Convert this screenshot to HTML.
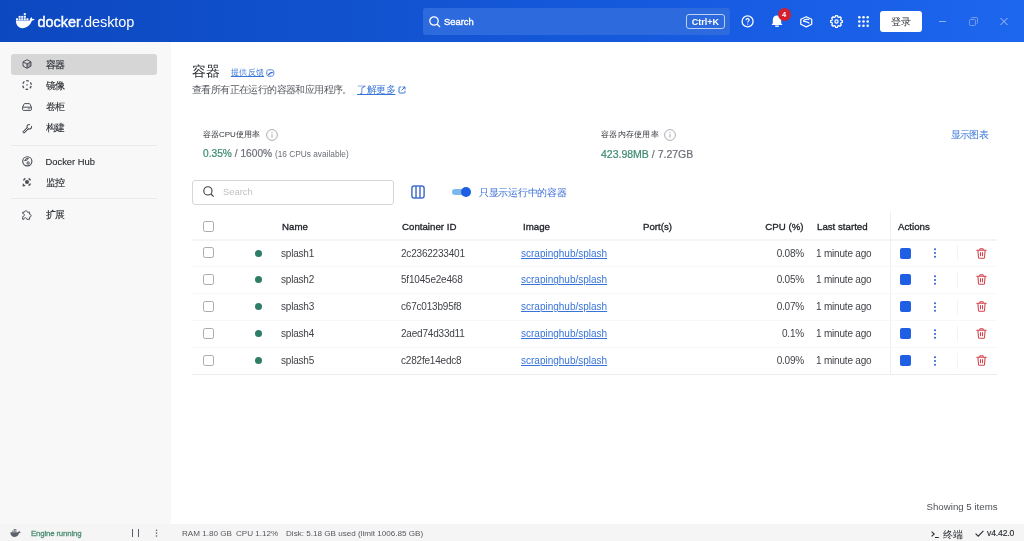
<!DOCTYPE html>
<html><head><meta charset="utf-8">
<style>
*{box-sizing:border-box;margin:0;padding:0}
html,body{width:1024px;height:541px;overflow:hidden;font-family:"Liberation Sans",sans-serif;background:#fff;color:#1f2328}
.a{position:absolute;white-space:nowrap}
svg{position:absolute;overflow:visible}
#hdr{position:absolute;left:0;top:0;width:1024px;height:42px;background:linear-gradient(90deg,#0c48c0 0%,#1253d0 38%,#175ce3 72%,#1d66ee 100%)}
#side{position:absolute;left:0;top:42px;width:171px;height:482px;background:#f8f8f8}
#foot{position:absolute;left:0;top:524px;width:1024px;height:17px;background:#f5f5f5}
.nav{position:absolute;left:11px;width:146px;height:21px;border-radius:3px;font-size:10.2px;letter-spacing:-0.6px;color:#26292e;-webkit-text-stroke:0.1px #26292e}
.nav.sel{background:#d6d6d7}
.nav .t{position:absolute;left:34.5px;top:5px}
.hsep{position:absolute;left:11px;width:146px;height:1px;background:#e6e7e9}
.th{font-size:9.7px;color:#1f2228;-webkit-text-stroke:0.32px #1f2228}
.td{font-size:10px;letter-spacing:-0.2px;color:#404348}
.rowline{position:absolute;left:192px;width:805px;height:1px;background:#f8f8f9}
.cb{position:absolute;left:203.2px;width:11.3px;height:11.3px;border:1.4px solid #a9acb1;border-radius:2.2px;background:#fff}
.dot{position:absolute;left:255px;width:7px;height:7px;border-radius:50%;background:#2f7d66}
.stop{position:absolute;left:900px;width:11px;height:11px;border-radius:2px;background:#1f5fe3}
.lnk{color:#3874d8;text-decoration:underline}
</style></head>
<body><div id="wrap" style="position:absolute;left:0;top:0;width:1024px;height:541px;will-change:transform">
<div id="hdr">
  <!-- whale logo -->
  <svg style="left:15px;top:12px" width="20" height="17" viewBox="0 0 20 17">
    <g fill="#fff">
      <rect x="1" y="6.3" width="2" height="1.9"/><rect x="3.6" y="6.3" width="2" height="1.9"/><rect x="6.2" y="6.3" width="2" height="1.9"/><rect x="8.8" y="6.3" width="2" height="1.9"/><rect x="11.4" y="6.3" width="2" height="1.9"/>
      <rect x="3.6" y="3.9" width="2" height="1.9"/><rect x="6.2" y="3.9" width="2" height="1.9"/><rect x="8.8" y="3.9" width="2" height="1.9"/>
      <rect x="8.8" y="1.1" width="2" height="2.1"/>
      <path d="M0.9 8.6 H14.6 C15 7.3 15.6 5.8 16.2 5.1 C16.7 5.8 17.1 6.5 17.5 7.1 C18.2 6.9 19 6.9 19.7 7.2 C19.1 8.1 18.1 8.6 17 8.6 C15.6 13 12 16.2 7.4 16.2 C3.4 16.2 0.9 13 0.9 8.6 Z"/>
    </g>
  </svg>
  <div class="a" style="left:37.5px;top:13.5px;font-size:14.5px;color:#fff;letter-spacing:-0.05px"><span style="-webkit-text-stroke:0.4px #fff">docker</span>.desktop</div>
  <!-- search -->
  <div class="a" style="left:423px;top:8px;width:307px;height:27px;background:#2c6ade;border-radius:3px"></div>
  <svg style="left:429px;top:16px" width="12" height="12" viewBox="0 0 12 12"><circle cx="5" cy="5" r="4.2" fill="none" stroke="#fff" stroke-width="1.3"/><path d="M8 8 L11 11" stroke="#fff" stroke-width="1.3"/></svg>
  <div class="a" style="left:444px;top:16px;font-size:9.4px;color:#fff;-webkit-text-stroke:0.35px #fff">Search</div>
  <div class="a" style="left:686px;top:14px;width:39px;height:15px;border:1px solid #bcd0f6;border-radius:3px;font-size:9px;font-weight:bold;color:#fff;text-align:center;line-height:14.5px">Ctrl+K</div>
  <!-- help -->
  <svg style="left:741px;top:15px" width="13" height="13" viewBox="0 0 13 13"><circle cx="6.6" cy="6.4" r="5.5" fill="none" stroke="#fff" stroke-width="1.25"/><path d="M5 5.2 C5 4.2 5.7 3.6 6.6 3.6 C7.5 3.6 8.2 4.2 8.2 5 C8.2 6.1 6.7 6.2 6.7 7.5" fill="none" stroke="#fff" stroke-width="1.15"/><circle cx="6.7" cy="9.1" r="0.65" fill="#fff"/></svg>
  <!-- bell -->
  <svg style="left:771px;top:15px" width="12" height="13" viewBox="0 0 12 13"><path d="M6 0.5 C3.2 0.5 1.8 2.6 1.8 5.2 V8.2 L0.5 10 H11.5 L10.2 8.2 V5.2 C10.2 2.6 8.8 0.5 6 0.5 Z" fill="#fff"/><path d="M4.2 11.2 H7.8" stroke="#fff" stroke-width="1.4"/></svg>
  <div class="a" style="left:777.5px;top:8.3px;width:13px;height:13px;border-radius:50%;background:#d3202e;color:#fff;font-size:7.5px;font-weight:bold;text-align:center;line-height:13px">4</div>
  <!-- learning cap -->
  <svg style="left:800px;top:16px" width="13" height="12" viewBox="0 0 13 12"><path d="M6.25 0.7 L11.7 3.2 V8.3 L6.25 10.9 L0.8 8.3 V3.2 Z" fill="none" stroke="#fff" stroke-width="1.25" stroke-linejoin="round"/><path d="M3.2 5.2 C4.5 3.4 7.5 2.8 9.3 3.6 M3.2 5.2 C5 6 7.8 5.4 9.3 7.4" fill="none" stroke="#fff" stroke-width="1.2"/></svg>
  <!-- gear -->
  <svg style="left:829.5px;top:15px" width="13" height="13" viewBox="0 0 13 13"><path d="M5.58 0.67 L7.42 0.67 L7.67 1.95 L8.89 2.45 L9.97 1.73 L11.27 3.03 L10.55 4.11 L11.05 5.33 L12.33 5.58 L12.33 7.42 L11.05 7.67 L10.55 8.89 L11.27 9.97 L9.97 11.27 L8.89 10.55 L7.67 11.05 L7.42 12.33 L5.58 12.33 L5.33 11.05 L4.11 10.55 L3.03 11.27 L1.73 9.97 L2.45 8.89 L1.95 7.67 L0.67 7.42 L0.67 5.58 L1.95 5.33 L2.45 4.11 L1.73 3.03 L3.03 1.73 L4.11 2.45 L5.33 1.95 Z" fill="none" stroke="#fff" stroke-width="1.25" stroke-linejoin="round"/><circle cx="6.5" cy="6.5" r="1.6" fill="none" stroke="#fff" stroke-width="1.2"/></svg>
  <!-- grid -->
  <svg style="left:858px;top:16.3px" width="11" height="11" viewBox="0 0 11 11"><g fill="#fff"><circle cx="1.3" cy="1.3" r="1.25"/><circle cx="5.5" cy="1.3" r="1.25"/><circle cx="9.7" cy="1.3" r="1.25"/><circle cx="1.3" cy="5.5" r="1.25"/><circle cx="5.5" cy="5.5" r="1.25"/><circle cx="9.7" cy="5.5" r="1.25"/><circle cx="1.3" cy="9.7" r="1.25"/><circle cx="5.5" cy="9.7" r="1.25"/><circle cx="9.7" cy="9.7" r="1.25"/></g></svg>
  <!-- login -->
  <div class="a" style="left:880px;top:11px;width:42px;height:21px;background:#fff;border-radius:3px;font-size:10px;color:#2a2d33;text-align:center;line-height:22px">登录</div>
  <!-- window controls -->
  <div class="a" style="left:939px;top:21px;width:7px;height:1px;background:#8fb0ee"></div>
  <svg style="left:969px;top:17px" width="9" height="9" viewBox="0 0 9 9"><rect x="0.5" y="2.5" width="6" height="6" rx="1" fill="none" stroke="#7fa3ea" stroke-width="0.9"/><path d="M2.5 1.5 V1.2 C2.5 0.8 2.8 0.5 3.2 0.5 H7.8 C8.2 0.5 8.5 0.8 8.5 1.2 V5.8 C8.5 6.2 8.2 6.5 7.8 6.5 H7.5" fill="none" stroke="#7fa3ea" stroke-width="0.9"/></svg>
  <svg style="left:1000px;top:18px" width="8" height="7" viewBox="0 0 8 7"><path d="M0.5 0 L7.5 7 M7.5 0 L0.5 7" stroke="#a9c2f2" stroke-width="1"/></svg>
</div>

<div id="side">
  <div class="nav sel" style="top:11.5px;height:21px"><span class="t" style="top:4.8px">容器</span></div>
  <div class="nav" style="top:32px"><span class="t">镜像</span></div>
  <div class="nav" style="top:53px"><span class="t">卷柜</span></div>
  <div class="nav" style="top:74px"><span class="t">构建</span></div>
  <div class="hsep" style="top:102.5px;background:#e9eaec"></div>
  <div class="nav" style="top:108px"><span class="t" style="font-size:9.4px;letter-spacing:0;top:5.5px">Docker Hub</span></div>
  <div class="nav" style="top:128.5px"><span class="t">监控</span></div>
  <div class="hsep" style="top:156px;background:#e9eaec"></div>
  <div class="nav" style="top:161px"><span class="t">扩展</span></div>
  <!-- icons -->
  <svg style="left:21.8px;top:17px" width="10" height="10" viewBox="0 0 10 10"><path d="M5 5 L9 2.9 V7.1 L5 9.3 Z" fill="#9a9da2"/><path d="M5 0.7 L9 2.9 V7.1 L5 9.3 L1 7.1 V2.9 Z M1 2.9 L5 5 L9 2.9 M5 5 V9.3" fill="none" stroke="#4a4e55" stroke-width="1" stroke-linejoin="round"/></svg>
  <svg style="left:21.5px;top:38px" width="10" height="10" viewBox="0 0 10 10"><circle cx="5" cy="5" r="4.3" fill="none" stroke="#4a4e55" stroke-width="1.3" stroke-dasharray="2.6 1.9" stroke-dashoffset="3.55"/><path d="M3.9 4.5 H6.1 L5 6.1 Z" fill="#4a4e55"/></svg>
  <svg style="left:21.5px;top:60.5px" width="10" height="8" viewBox="0 0 10 8"><path d="M0.6 4.2 L1.9 1.3 C2.1 0.8 2.4 0.6 2.9 0.6 H7.1 C7.6 0.6 7.9 0.8 8.1 1.3 L9.4 4.2 V6.6 C9.4 7.1 9.1 7.4 8.6 7.4 H1.4 C0.9 7.4 0.6 7.1 0.6 6.6 Z M0.6 4.2 H9.4" fill="none" stroke="#4a4e55" stroke-width="1" stroke-linejoin="round"/><circle cx="6.3" cy="5.8" r="0.55" fill="#4a4e55"/><circle cx="7.7" cy="5.8" r="0.55" fill="#4a4e55"/></svg>
  <svg style="left:21.5px;top:80.5px" width="11" height="11" viewBox="0 0 11 11"><g stroke-linecap="round"><path d="M1.9 9.1 L5.6 5.4" stroke="#4a4e55" stroke-width="2.6"/><circle cx="7.3" cy="3.7" r="2.8" fill="#4a4e55"/><path d="M1.9 9.1 L5.6 5.4" stroke="#f8f8f8" stroke-width="0.9"/><circle cx="7.3" cy="3.7" r="1.8" fill="#f8f8f8"/><path d="M7.3 3.7 L10.5 0.5" stroke="#f8f8f8" stroke-width="2.1" stroke-linecap="butt"/></g></svg>
  <svg style="left:21.5px;top:113.5px" width="11" height="11" viewBox="0 0 11 11"><circle cx="5.3" cy="5.3" r="4.6" fill="none" stroke="#4a4e55" stroke-width="1.15"/><path d="M2.6 4.6 C3 3.4 4.6 2.3 6.3 2.2 C6.6 3.3 4.6 4.5 2.6 4.6 Z" fill="none" stroke="#4a4e55" stroke-width="1"/><circle cx="6.1" cy="7" r="1.2" fill="none" stroke="#4a4e55" stroke-width="1"/></svg>
  <svg style="left:21.5px;top:134.5px" width="10" height="10" viewBox="0 0 10 10"><g fill="#4a4e55"><circle cx="5" cy="5" r="2"/><path d="M0.8 2.9 L2.9 0.8 L3.8 1.9 L1.9 3.8 Z"/><path d="M9.2 2.9 L7.1 0.8 L6.2 1.9 L8.1 3.8 Z"/><path d="M0.5 9.5 L0.9 6.3 L3.7 9.1 Z"/><path d="M9.2 7.1 L7.1 9.2 L6.2 8.1 L8.1 6.2 Z"/></g></svg>
  <svg style="left:21.5px;top:167.5px" width="10" height="10" viewBox="0 0 10 10"><path d="M3.5 0.8 C4.5 0.5 5.4 1.2 5.4 2.2 H7.6 V4.2 C8.6 4.2 9.3 5 9.1 6 C8.9 6.8 8.2 7.2 7.6 7.2 V9.3 H4.8 C4.8 8.4 4.2 7.8 3.3 7.8 C2.4 7.8 1.8 8.4 1.8 9.3 H0.7 V6.6 C1.6 6.6 2.3 5.9 2.3 5 C2.3 4.1 1.6 3.4 0.7 3.4 V2.2 H2.3 C2.3 1.6 2.8 1 3.5 0.8 Z" fill="none" stroke="#4a4e55" stroke-width="1" stroke-linejoin="round"/></svg>
</div>

<div id="main">
</div>

<!-- page header -->
<div class="a" style="left:192px;top:63px;font-size:14px;letter-spacing:0.3px;color:#1f2328">容器</div>
<div class="a lnk" style="left:231px;top:67px;font-size:8px;letter-spacing:0.25px">提供反馈</div>
<svg style="left:266px;top:69px" width="9" height="8" viewBox="0 0 9 8"><path d="M0.8 2.6 C0.8 1.5 1.5 0.8 2.6 0.8 H5.8 C7 0.8 7.8 1.6 7.8 2.8 V5 C7.8 6.2 7 7.2 5.8 7.2 H2.8 C1.6 7.2 0.8 6.2 0.8 5 Z" fill="none" stroke="#4a78d0" stroke-width="0.9"/><path d="M2.3 6.3 C3 4.5 4.5 3.6 6.8 3.4" fill="none" stroke="#3a6cd0" stroke-width="1.1"/></svg>
<div class="a" style="left:192px;top:82.9px;font-size:10.4px;letter-spacing:-0.6px;color:#54585e">查看所有正在运行的容器和应用程序。</div>
<div class="a lnk" style="left:357px;top:82.9px;font-size:10.4px;letter-spacing:-0.4px">了解更多</div>
<svg style="left:398px;top:85.5px" width="8" height="8" viewBox="0 0 8 8"><path d="M3.2 1 H1.6 C1.2 1 1 1.2 1 1.6 V6.4 C1 6.8 1.2 7 1.6 7 H6.4 C6.8 7 7 6.8 7 6.4 V4.8 M4.5 1 H7 V3.5 M7 1 L3.5 4.5" fill="none" stroke="#3874d8" stroke-width="1"/></svg>

<!-- stats -->
<div class="a" style="left:203px;top:129px;font-size:8px;color:#2f3237">容器CPU使用率</div>
<svg style="left:266px;top:128.5px" width="12" height="12" viewBox="0 0 12 12"><circle cx="6" cy="6" r="5.4" fill="none" stroke="#a0a4aa" stroke-width="0.9"/><path d="M6 5.3 V8.5" stroke="#a0a4aa" stroke-width="1"/><circle cx="6" cy="3.7" r="0.6" fill="#a0a4aa"/></svg>
<div class="a" style="left:203px;top:148.3px;font-size:10.2px;color:#6b6f76;-webkit-text-stroke:0.2px #6b6f76"><span style="color:#3b8a6e;-webkit-text-stroke:0.2px #3b8a6e">0.35%</span> / 1600% <span style="font-size:8.3px;-webkit-text-stroke:0">(16 CPUs available)</span></div>
<div class="a" style="left:601px;top:129px;font-size:8px;letter-spacing:0.27px;color:#2f3237">容器内存使用率</div>
<svg style="left:664px;top:128.5px" width="12" height="12" viewBox="0 0 12 12"><circle cx="6" cy="6" r="5.4" fill="none" stroke="#a0a4aa" stroke-width="0.9"/><path d="M6 5.3 V8.5" stroke="#a0a4aa" stroke-width="1"/><circle cx="6" cy="3.7" r="0.6" fill="#a0a4aa"/></svg>
<div class="a" style="left:601px;top:148.2px;font-size:10.5px;color:#6b6f76;-webkit-text-stroke:0.2px #6b6f76"><span style="color:#3b8a6e;-webkit-text-stroke:0.2px #3b8a6e">423.98MB</span> / 7.27GB</div>
<div class="a" style="left:950.5px;top:127.9px;font-size:10px;letter-spacing:-0.65px;color:#3874d8">显示图表</div>

<!-- toolbar -->
<div class="a" style="left:192px;top:180px;width:202px;height:25px;border:1px solid #d4d6da;border-radius:3px"></div>
<svg style="left:203px;top:186.2px" width="11" height="11" viewBox="0 0 11 11"><circle cx="4.9" cy="4.9" r="4.1" fill="none" stroke="#3a3d42" stroke-width="1.1"/><path d="M7.9 7.9 L10.6 10.6" stroke="#3a3d42" stroke-width="1.2"/></svg>
<div class="a" style="left:223px;top:186.3px;font-size:9.4px;color:#c0c2c6">Search</div>
<svg style="left:411px;top:185px" width="14" height="14" viewBox="0 0 14 14"><rect x="0.9" y="0.9" width="12.2" height="12.2" rx="2.3" fill="none" stroke="#4571cc" stroke-width="1.5"/><path d="M5 1 V13 M9 1 V13" stroke="#4571cc" stroke-width="1.5"/></svg>
<div class="a" style="left:452px;top:189.2px;width:16px;height:6px;border-radius:3px;background:#7bb7e8"></div>
<div class="a" style="left:460.8px;top:186.9px;width:10.6px;height:10.6px;border-radius:50%;background:#1d5fe2"></div>
<div class="a" style="left:479px;top:185.6px;font-size:10.4px;letter-spacing:-0.3px;color:#3a6fd6">只显示运行中的容器</div>

<!-- table -->
<div class="a" style="left:890px;top:212px;width:1px;height:162px;background:#efeff1"></div>
<div class="cb" style="top:221px"></div>
<div class="a th" style="left:282px;top:221px">Name</div>
<div class="a th" style="left:402px;top:221px">Container ID</div>
<div class="a th" style="left:523px;top:221px">Image</div>
<div class="a th" style="left:643px;top:221px">Port(s)</div>
<div class="a th" style="right:220.5px;top:221px">CPU (%)</div>
<div class="a th" style="left:817px;top:221px">Last started</div>
<div class="a th" style="left:898px;top:221px">Actions</div>
<div class="a" style="left:192px;top:238.5px;width:805px;height:2.5px;background:#f4f4f5"></div>

<!--ROWS-->
<div class="cb" style="top:247.2px"></div>
<div class="dot" style="top:249.6px"></div>
<div class="a td" style="left:281px;top:247.5px">splash1</div>
<div class="a td" style="left:401px;top:247.5px">2c2362233401</div>
<div class="a td lnk" style="letter-spacing:0px;left:521px;top:247.5px">scrapinghub/splash</div>
<div class="a td" style="right:220px;top:247.5px">0.08%</div>
<div class="a td" style="left:816px;top:247.5px">1 minute ago</div>
<div class="stop" style="top:247.6px"></div>
<svg style="left:933px;top:248.1px" width="4" height="10" viewBox="0 0 4 10"><g fill="#2a5cd0"><circle cx="2" cy="1.2" r="1"/><circle cx="2" cy="5" r="1"/><circle cx="2" cy="8.8" r="1"/></g></svg>
<div class="a" style="left:957px;top:245.1px;width:1px;height:16px;background:#f4f4f5"></div>
<svg style="left:975.5px;top:247.6px" width="11" height="11" viewBox="0 0 11 11"><path d="M0.8 2.2 H10.2 M3.8 2 V1.2 C3.8 0.9 4 0.7 4.3 0.7 H6.7 C7 0.7 7.2 0.9 7.2 1.2 V2 M1.9 2.4 L2.5 9.5 C2.55 10 2.9 10.3 3.4 10.3 H7.6 C8.1 10.3 8.45 10 8.5 9.5 L9.1 2.4 M4.5 4.6 V7.8 M6.5 4.6 V7.8" fill="none" stroke="#d4404b" stroke-width="1.05" stroke-linecap="round"/></svg>
<div class="rowline" style="top:266.1px"></div>
<div class="cb" style="top:274.0px"></div>
<div class="dot" style="top:276.4px"></div>
<div class="a td" style="left:281px;top:274.3px">splash2</div>
<div class="a td" style="left:401px;top:274.3px">5f1045e2e468</div>
<div class="a td lnk" style="letter-spacing:0px;left:521px;top:274.3px">scrapinghub/splash</div>
<div class="a td" style="right:220px;top:274.3px">0.05%</div>
<div class="a td" style="left:816px;top:274.3px">1 minute ago</div>
<div class="stop" style="top:274.4px"></div>
<svg style="left:933px;top:274.9px" width="4" height="10" viewBox="0 0 4 10"><g fill="#2a5cd0"><circle cx="2" cy="1.2" r="1"/><circle cx="2" cy="5" r="1"/><circle cx="2" cy="8.8" r="1"/></g></svg>
<div class="a" style="left:957px;top:271.9px;width:1px;height:16px;background:#f4f4f5"></div>
<svg style="left:975.5px;top:274.4px" width="11" height="11" viewBox="0 0 11 11"><path d="M0.8 2.2 H10.2 M3.8 2 V1.2 C3.8 0.9 4 0.7 4.3 0.7 H6.7 C7 0.7 7.2 0.9 7.2 1.2 V2 M1.9 2.4 L2.5 9.5 C2.55 10 2.9 10.3 3.4 10.3 H7.6 C8.1 10.3 8.45 10 8.5 9.5 L9.1 2.4 M4.5 4.6 V7.8 M6.5 4.6 V7.8" fill="none" stroke="#d4404b" stroke-width="1.05" stroke-linecap="round"/></svg>
<div class="rowline" style="top:293.0px"></div>
<div class="cb" style="top:300.9px"></div>
<div class="dot" style="top:303.3px"></div>
<div class="a td" style="left:281px;top:301.2px">splash3</div>
<div class="a td" style="left:401px;top:301.2px">c67c013b95f8</div>
<div class="a td lnk" style="letter-spacing:0px;left:521px;top:301.2px">scrapinghub/splash</div>
<div class="a td" style="right:220px;top:301.2px">0.07%</div>
<div class="a td" style="left:816px;top:301.2px">1 minute ago</div>
<div class="stop" style="top:301.3px"></div>
<svg style="left:933px;top:301.8px" width="4" height="10" viewBox="0 0 4 10"><g fill="#2a5cd0"><circle cx="2" cy="1.2" r="1"/><circle cx="2" cy="5" r="1"/><circle cx="2" cy="8.8" r="1"/></g></svg>
<div class="a" style="left:957px;top:298.8px;width:1px;height:16px;background:#f4f4f5"></div>
<svg style="left:975.5px;top:301.3px" width="11" height="11" viewBox="0 0 11 11"><path d="M0.8 2.2 H10.2 M3.8 2 V1.2 C3.8 0.9 4 0.7 4.3 0.7 H6.7 C7 0.7 7.2 0.9 7.2 1.2 V2 M1.9 2.4 L2.5 9.5 C2.55 10 2.9 10.3 3.4 10.3 H7.6 C8.1 10.3 8.45 10 8.5 9.5 L9.1 2.4 M4.5 4.6 V7.8 M6.5 4.6 V7.8" fill="none" stroke="#d4404b" stroke-width="1.05" stroke-linecap="round"/></svg>
<div class="rowline" style="top:319.8px"></div>
<div class="cb" style="top:327.7px"></div>
<div class="dot" style="top:330.1px"></div>
<div class="a td" style="left:281px;top:328.0px">splash4</div>
<div class="a td" style="left:401px;top:328.0px">2aed74d33d11</div>
<div class="a td lnk" style="letter-spacing:0px;left:521px;top:328.0px">scrapinghub/splash</div>
<div class="a td" style="right:220px;top:328.0px">0.1%</div>
<div class="a td" style="left:816px;top:328.0px">1 minute ago</div>
<div class="stop" style="top:328.1px"></div>
<svg style="left:933px;top:328.6px" width="4" height="10" viewBox="0 0 4 10"><g fill="#2a5cd0"><circle cx="2" cy="1.2" r="1"/><circle cx="2" cy="5" r="1"/><circle cx="2" cy="8.8" r="1"/></g></svg>
<div class="a" style="left:957px;top:325.6px;width:1px;height:16px;background:#f4f4f5"></div>
<svg style="left:975.5px;top:328.1px" width="11" height="11" viewBox="0 0 11 11"><path d="M0.8 2.2 H10.2 M3.8 2 V1.2 C3.8 0.9 4 0.7 4.3 0.7 H6.7 C7 0.7 7.2 0.9 7.2 1.2 V2 M1.9 2.4 L2.5 9.5 C2.55 10 2.9 10.3 3.4 10.3 H7.6 C8.1 10.3 8.45 10 8.5 9.5 L9.1 2.4 M4.5 4.6 V7.8 M6.5 4.6 V7.8" fill="none" stroke="#d4404b" stroke-width="1.05" stroke-linecap="round"/></svg>
<div class="rowline" style="top:346.7px"></div>
<div class="cb" style="top:354.6px"></div>
<div class="dot" style="top:357.0px"></div>
<div class="a td" style="left:281px;top:354.9px">splash5</div>
<div class="a td" style="left:401px;top:354.9px">c282fe14edc8</div>
<div class="a td lnk" style="letter-spacing:0px;left:521px;top:354.9px">scrapinghub/splash</div>
<div class="a td" style="right:220px;top:354.9px">0.09%</div>
<div class="a td" style="left:816px;top:354.9px">1 minute ago</div>
<div class="stop" style="top:355.0px"></div>
<svg style="left:933px;top:355.5px" width="4" height="10" viewBox="0 0 4 10"><g fill="#2a5cd0"><circle cx="2" cy="1.2" r="1"/><circle cx="2" cy="5" r="1"/><circle cx="2" cy="8.8" r="1"/></g></svg>
<div class="a" style="left:957px;top:352.5px;width:1px;height:16px;background:#f4f4f5"></div>
<svg style="left:975.5px;top:355.0px" width="11" height="11" viewBox="0 0 11 11"><path d="M0.8 2.2 H10.2 M3.8 2 V1.2 C3.8 0.9 4 0.7 4.3 0.7 H6.7 C7 0.7 7.2 0.9 7.2 1.2 V2 M1.9 2.4 L2.5 9.5 C2.55 10 2.9 10.3 3.4 10.3 H7.6 C8.1 10.3 8.45 10 8.5 9.5 L9.1 2.4 M4.5 4.6 V7.8 M6.5 4.6 V7.8" fill="none" stroke="#d4404b" stroke-width="1.05" stroke-linecap="round"/></svg>
<div class="rowline" style="top:373.5px;background:#ececee"></div>
<!--/ROWS-->

<div class="a" style="left:926.5px;top:500.5px;font-size:9.7px;color:#4f5257">Showing 5 items</div>
<div id="foot"></div>
<svg style="left:10px;top:528.5px" width="11" height="8" viewBox="0 0 11 8"><g fill="#5b606a"><rect x="2.2" y="1.6" width="1.2" height="1.2"/><rect x="3.7" y="1.6" width="1.2" height="1.2"/><rect x="5.2" y="1.6" width="1.2" height="1.2"/><rect x="3.7" y="0.1" width="1.2" height="1.2"/><rect x="5.2" y="0.1" width="1.2" height="1.2"/><path d="M0.3 3.3 H8 C8.3 2.4 9.2 2.1 9.8 2.6 C10.2 2.9 10.6 3.1 10.9 3.3 C10.4 3.8 9.8 4 9.1 3.9 C8.5 6.3 6.7 7.9 4 7.9 C1.7 7.9 0.4 6 0.3 3.3 Z"/></g></svg>
<div class="a" style="left:31px;top:528.8px;font-size:7.8px;letter-spacing:-0.15px;color:#4f8f76;-webkit-text-stroke:0.3px #4f8f76">Engine running</div>
<div class="a" style="left:132px;top:529px;width:1.1px;height:8px;background:#5c6066"></div>
<div class="a" style="left:137.7px;top:529px;width:1.1px;height:8px;background:#5c6066"></div>
<svg style="left:154.5px;top:529px" width="3" height="8" viewBox="0 0 3 8"><g fill="#5a5e65"><circle cx="1.5" cy="1.2" r="0.8"/><circle cx="1.5" cy="4.1" r="0.8"/><circle cx="1.5" cy="7" r="0.8"/></g></svg>
<div class="a" style="left:182px;top:528.5px;font-size:8.1px;color:#55585d">RAM 1.80 GB</div>
<div class="a" style="left:236px;top:528.5px;font-size:8.1px;color:#55585d">CPU 1.12%</div>
<div class="a" style="left:286px;top:528.5px;font-size:8.1px;color:#55585d">Disk: 5.18 GB used (limit 1006.85 GB)</div>
<svg style="left:931px;top:530.5px" width="8" height="7" viewBox="0 0 8 7"><path d="M0.6 0.6 L3.2 3 L0.6 5.4 M4 6.5 H7.8" fill="none" stroke="#2a2d33" stroke-width="1.1"/></svg>
<div class="a" style="left:943px;top:528px;font-size:10px;letter-spacing:0.2px;color:#2a2d33">终端</div>
<svg style="left:974.5px;top:530px" width="9" height="7" viewBox="0 0 9 7"><path d="M0.6 3.6 L3.2 6.2 L8.4 0.8" fill="none" stroke="#2a2d33" stroke-width="1.1"/></svg>
<div class="a" style="left:987px;top:528.3px;font-size:8.6px;letter-spacing:-0.15px;color:#2a2d33;-webkit-text-stroke:0.15px #2a2d33">v4.42.0</div>
</div></body></html>
